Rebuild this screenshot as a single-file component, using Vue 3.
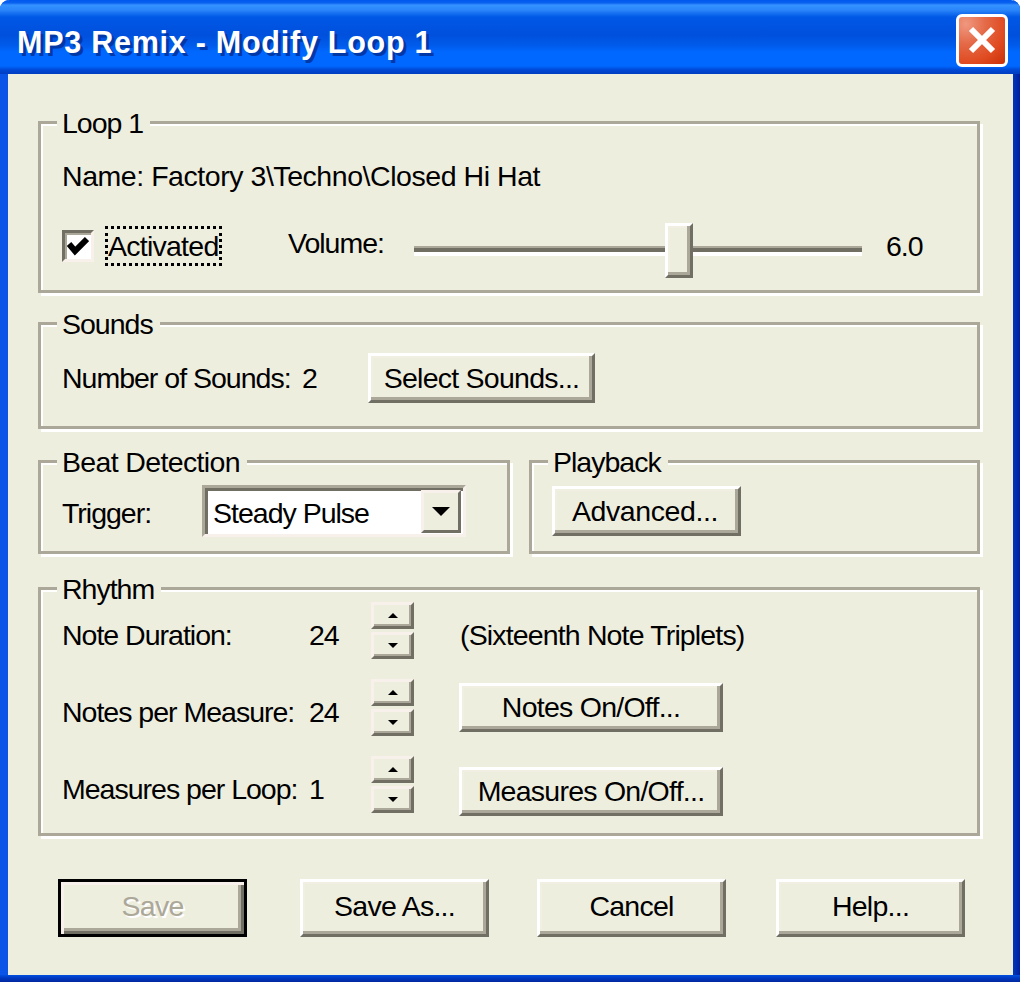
<script setup>
const rhythm = [
  { label: 'Note Duration:', value: '24', note: '(Sixteenth Note Triplets)' },
  { label: 'Notes per Measure:', value: '24', button: 'Notes On/Off...' },
  { label: 'Measures per Loop:', value: '1', button: 'Measures On/Off...' }
]
</script>

<template>
  <div class="window">
    <header class="titlebar">
      <span class="title">MP3 Remix - Modify Loop 1</span>
      <button class="close" aria-label="Close">
        <svg width="28" height="28" viewBox="0 0 28 28"><path d="M3 3 L25 25 M25 3 L3 25" stroke="#fff" stroke-width="6" fill="none"/></svg>
      </button>
    </header>
    <main class="body">
      <section class="group loop">
        <span class="legend">Loop 1</span>
        <div class="name">Name: Factory 3\Techno\Closed Hi Hat</div>
        <div class="volume-row">
          <span class="check">
            <svg width="22" height="20" viewBox="0 0 22 20"><path d="M2 8 L8 15 L20 3" stroke="#000" stroke-width="6" fill="none"/></svg>
          </span>
          <span class="focus">Activated</span>
          <span class="vol-label">Volume:</span>
          <div class="slider"><span class="thumb"></span></div>
          <span class="vol-value">6.0</span>
        </div>
      </section>

      <section class="group sounds">
        <span class="legend">Sounds</span>
        <span class="sounds-label">Number of Sounds:</span>
        <span class="sounds-count">2</span>
        <button class="btn select">Select Sounds...</button>
      </section>

      <div class="split">
        <section class="group beat">
          <span class="legend">Beat Detection</span>
          <span class="trigger">Trigger:</span>
          <div class="combo">
            <span class="combo-text">Steady Pulse</span>
            <span class="combo-btn"><i class="arrow-down"></i></span>
          </div>
        </section>
        <section class="group playback">
          <span class="legend">Playback</span>
          <button class="btn advanced">Advanced...</button>
        </section>
      </div>

      <section class="group rhythm">
        <span class="legend">Rhythm</span>
        <div v-for="row in rhythm" :key="row.label" class="rhythm-row">
          <span class="cell">{{ row.label }}</span>
          <span class="cell">{{ row.value }}</span>
          <div class="spinner">
            <span class="spin"><i class="tiny-up"></i></span>
            <span class="spin"><i class="tiny-down"></i></span>
          </div>
          <span v-if="row.note" class="cell note">{{ row.note }}</span>
          <button v-else class="btn onoff">{{ row.button }}</button>
        </div>
      </section>

      <footer class="actions">
        <button class="btn action default" disabled><span class="dis">Save</span></button>
        <button class="btn action">Save As...</button>
        <button class="btn action">Cancel</button>
        <button class="btn action">Help...</button>
      </footer>
    </main>
  </div>
</template>

<style>
html, body { margin: 0; background: #fff; }
</style>

<style scoped>
.window {
  width: 1020px;
  height: 982px;
  box-sizing: border-box;
  display: flex;
  flex-direction: column;
  background:
    linear-gradient(0deg, #0028a0 0, #0038c0 4px, #0050e0 7px, transparent 7px),
    linear-gradient(90deg, #0a55e8 0, #0a55e8 8px, transparent 8px, transparent 1013px, #0038b8 1013px, #001ea0 1020px);
  border-radius: 9px 9px 0 0;
  overflow: hidden;
  font-family: "Liberation Sans", Arial, sans-serif;
  font-size: 28.5px;
  letter-spacing: -1px;
  color: #000;
}
.titlebar {
  height: 74px;
  flex: none;
  box-sizing: border-box;
  padding: 0 12px 0 17px;
  display: flex;
  align-items: center;
  justify-content: space-between;
  background: linear-gradient(180deg, #0058ee 0, #0a62f0 3px, #3592ff 5px, #2a86fa 10px, #0058e6 17px, #0050dc 35px, #005cec 46px, #0068ff 52px, #0068ff 66px, #0048d4 70px, #003cc0 74px);
}
.title {
  color: #fff;
  font-weight: 700;
  font-size: 30.5px;
  letter-spacing: 0.75px;
  text-shadow: 3px 3px 0 #0038a8;
  position: relative;
  top: 5px;
}
.close {
  width: 52px;
  height: 53px;
  padding: 0;
  border: 3px solid #fff;
  border-radius: 6px;
  display: flex;
  align-items: center;
  justify-content: center;
  background: radial-gradient(circle at 15% 15%, #f09880 0, #e46a48 35%, #e04a20 70%, #c83008 100%);
  position: relative;
  top: 3px;
}
.body {
  flex: 1;
  margin: 0 7px 7px 8px;
  padding: 47px 33px 0 30px;
  background: #eeeedf;
  display: flex;
  flex-direction: column;
  position: relative;
}
.group {
  position: relative;
  box-sizing: border-box;
  border: 3px solid #aca899;
  box-shadow: 3px 3px 0 #fff, inset 2px 2px 0 #fff;
}
.legend {
  position: absolute;
  left: 16px;
  top: -17px;
  padding: 0 7px 0 5px;
  line-height: 32px;
  background: #eeeedf;
}
.beat .legend { letter-spacing: -0.65px; }
.loop { height: 172px; padding: 35px 21px 0; }
.name { line-height: 34px; letter-spacing: -0.45px; }
.volume-row {
  display: flex;
  align-items: center;
  margin-top: 33px;
  height: 40px;
}
.check {
  width: 32px;
  height: 32px;
  box-sizing: border-box;
  flex: none;
  background: #fff;
  border: 3px solid #716f64;
  border-right-color: #f8f0ea;
  border-bottom-color: #f8f0ea;
  box-shadow: inset 2px 2px 0 #aca899;
  display: flex;
  align-items: center;
  justify-content: center;
}
.focus {
  margin-left: 11px;
  width: 117px;
  height: 40px;
  box-sizing: border-box;
  border: 3px dotted #000;
  line-height: 34px;
  letter-spacing: -0.75px;
  flex: none;
  white-space: nowrap;
  overflow: visible;
}
.vol-label { margin-left: 66px; width: 126px; flex: none; position: relative; top: -3px; }
.slider {
  width: 448px;
  height: 10px;
  flex: none;
  background: linear-gradient(180deg, #aca899 0, #aca899 2px, #716f64 2px, #716f64 6px, #fff 6px);
  position: relative;
  top: 5px;
}
.thumb {
  position: absolute;
  left: 251px;
  top: -23px;
  width: 28px;
  height: 55px;
  box-sizing: border-box;
  background: #eeeedf;
  border: 3px solid #fff;
  border-right-color: #716f64;
  border-bottom-color: #716f64;
  box-shadow: inset -3px -3px 0 #aca899, inset 2px 2px 0 #f1efe2;
}
.vol-value { margin-left: 24px; }

.sounds {
  height: 107px;
  margin-top: 29px;
  padding: 28px 0 0 21px;
  display: flex;
  align-items: flex-start;
}
.sounds-label { width: 240px; flex: none; line-height: 50px; }
.sounds-count { width: 66px; flex: none; line-height: 50px; }

.btn {
  font: inherit;
  letter-spacing: -0.75px;
  color: #000;
  box-sizing: border-box;
  padding: 0;
  background: #eeeedf;
  border: 3px solid #fff;
  border-right-color: #716f64;
  border-bottom-color: #716f64;
  box-shadow: inset -3px -3px 0 #aca899, inset 2px 2px 0 #f1efe2;
  display: flex;
  align-items: center;
  justify-content: center;
  white-space: nowrap;
}
.select { width: 227px; height: 50px; }

.split {
  display: flex;
  gap: 19px;
  margin-top: 31px;
}
.beat {
  width: 472px;
  height: 94px;
  padding: 22px 0 0 21px;
  display: flex;
  align-items: flex-start;
}
.trigger { width: 140px; flex: none; line-height: 56px; }
.combo {
  width: 264px;
  height: 52px;
  box-sizing: border-box;
  flex: none;
  background: #fff;
  border: 3px solid #aca899;
  border-right-color: #f8f0ea;
  border-bottom-color: #f8f0ea;
  box-shadow: inset 3px 3px 0 #716f64, inset -3px 0 0 #fff;
  display: flex;
  align-items: center;
  justify-content: space-between;
  padding: 3px 2px 3px 8px;
}
.combo-text { position: relative; top: 2px; }
.combo-btn {
  width: 40px;
  height: 43px;
  box-sizing: border-box;
  background: #eeeedf;
  border: 3px solid #f8f0ea;
  border-right-color: #716f64;
  border-bottom-color: #716f64;
  display: flex;
  align-items: center;
  justify-content: center;
}
.arrow-down {
  width: 0;
  height: 0;
  border-left: 9px solid transparent;
  border-right: 9px solid transparent;
  border-top: 9px solid #000;
}
.playback {
  flex: 1;
  height: 94px;
  padding: 23px 0 0 20px;
}
.advanced { width: 189px; height: 50px; letter-spacing: -0.4px; padding-right: 3px; }

.rhythm {
  height: 249px;
  margin-top: 33px;
  padding: 12px 0 0 21px;
  display: flex;
  flex-direction: column;
  gap: 20px;
}
.rhythm-row {
  display: grid;
  grid-template-columns: 247px 62px 43px auto;
  grid-template-rows: 57px;
  align-items: center;
  height: 57px;
}
.cell { margin-top: 10px; }
.spinner { display: flex; flex-direction: column; gap: 3px; }
.spin {
  height: 27px;
  box-sizing: border-box;
  background: #eeeedf;
  border: 3px solid #f8f0ea;
  border-right-color: #716f64;
  border-bottom-color: #716f64;
  box-shadow: inset -2px -2px 0 #aca899;
  display: flex;
  align-items: center;
  justify-content: center;
}
.tiny-up, .tiny-down {
  width: 0;
  height: 0;
  border-left: 5px solid transparent;
  border-right: 5px solid transparent;
}
.tiny-up { border-bottom: 5px solid #000; }
.tiny-down { border-top: 5px solid #000; }
.note { margin-left: 46px; white-space: nowrap; letter-spacing: -0.85px; }
.onoff { width: 264px; height: 49px; margin-left: 45px; }
.rhythm-row:last-child .onoff { align-self: start; margin-top: 11px; }

.actions {
  display: flex;
  gap: 53px;
  margin-top: 43px;
  padding-left: 20px;
}
.action { width: 189px; height: 58px; padding-bottom: 3px; }
.action:nth-child(3) { margin-left: -5px; }
.action:nth-child(4) { margin-left: -3px; }
.default { border-color: #000; box-shadow: inset 3px 3px 0 #f8f0ea, inset -3px -3px 0 #716f64, inset -6px -6px 0 #aca899; }
.dis { color: #aca899; text-shadow: 2px 2px 0 #fff; }
</style>
